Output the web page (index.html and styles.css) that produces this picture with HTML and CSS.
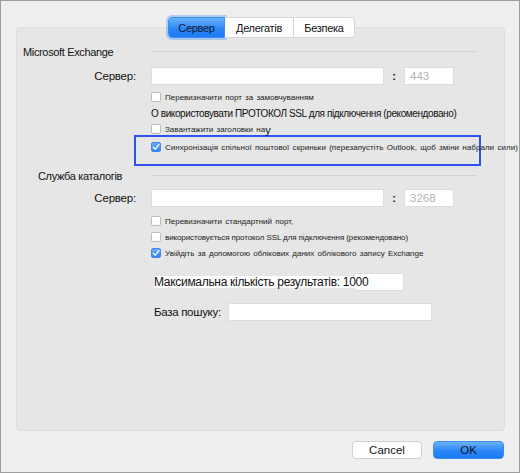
FILE: index.html
```html
<!DOCTYPE html>
<html>
<head>
<meta charset="utf-8">
<title>Обліковий запис Exchange</title>
<link rel="stylesheet" href="styles.css">
</head>
<body>
<div class="window">
	<div class="tabs">
		<span class="tab on">Сервер</span><span class="tab">Делегатів</span><span class="tab">Безпека</span>
	</div>
	<div class="panel">
		<div class="group-head h1"><span class="group-title">Microsoft Exchange</span><span class="rule"></span></div>
		<div class="row srv1">
			<span class="lbl">Сервер:</span>
			<div class="field wide"></div>
			<span class="colon">:</span>
			<div class="field port">443</div>
		</div>
		<div class="row indent c1"><span class="box"></span><span class="small">Перевизначити порт за замовчуванням</span></div>
		<div class="row indent ssl">О використовувати ПРОТОКОЛ SSL для підключення (рекомендовано)</div>
		<div class="row indent c3"><span class="box"></span><span class="small">Завантажити заголовки на</span><span class="big">у</span></div>
		<div class="callout">
			<div class="row"><span class="box on"><svg viewBox="0 0 10 10" width="10" height="10"><path d="M2.3 5.3 L4.2 7.3 L7.8 2.6" fill="none" stroke="#fff" stroke-width="1.3" stroke-linecap="round" stroke-linejoin="round"/></svg></span><span class="small wide-note">Синхронізація спільної поштової скриньки (перезапустіть Outlook, щоб зміни набрали сили)</span></div>
		</div>

		<div class="group-head h2"><span class="group-title">Служба каталогів</span><span class="rule"></span></div>
		<div class="row srv2">
			<span class="lbl">Сервер:</span>
			<div class="field wide"></div>
			<span class="colon">:</span>
			<div class="field port">3268</div>
		</div>
		<div class="row indent ca"><span class="box"></span><span class="small">Перевизначити стандартний порт,</span></div>
		<div class="row indent cb"><span class="box"></span><span class="small tight">використовується протокол SSL для підключення (рекомендовано)</span></div>
		<div class="row indent cc"><span class="box on"><svg viewBox="0 0 10 10" width="10" height="10"><path d="M2.3 5.3 L4.2 7.3 L7.8 2.6" fill="none" stroke="#fff" stroke-width="1.3" stroke-linecap="round" stroke-linejoin="round"/></svg></span><span class="small">Увійдіть за допомогою облікових даних облікового запису Exchange</span></div>

		<div class="row indent maxres"><span class="hl">Максимальна кількість результатів: 1000</span><div class="field num"></div></div>
		<div class="row indent base"><span class="plain">База пошуку:</span><div class="field search"></div></div>
	</div>
	<div class="buttons">
		<button class="btn">Cancel</button><button class="btn primary">OK</button>
	</div>
</div>
</body>
</html>
```

FILE: styles.css
```css
*{margin:0;padding:0;box-sizing:border-box;}
body{background:#fff;font-family:"Liberation Sans",Arial,sans-serif;color:#111;}

.window{width:520px;height:473px;border:1px solid #9d9d9d;background:#efefef;padding:16px 14px 0 15px;}

/* segmented tab control sits half over the panel */
.tabs{display:flex;justify-content:center;height:21px;margin-bottom:-11px;position:relative;z-index:1;padding-left:2px;}
.tab{display:flex;align-items:center;justify-content:center;height:21px;background:#fff;border:1px solid #d6d6d6;border-left:none;
	font-size:11px;letter-spacing:-0.3px;color:#111;}
.tab:nth-child(1){width:57px;}
.tab:nth-child(2){width:69px;}
.tab:nth-child(3){width:61px;border-radius:0 4px 4px 0;}
.tab.on{background:linear-gradient(#6cb2fb,#2a84f6 60%,#1f7af2);border:1px solid #3b8ef0;border-radius:4px 0 0 4px;
	box-shadow:0 0 0 2px rgba(120,175,245,.55);color:#0b1a33;}

.panel{height:404px;background:#e6e6e6;border:1px solid #dedede;border-radius:4px;padding-top:17px;padding-right:28px;}

.row{display:flex;align-items:center;}
.indent{padding-left:134px;}

.group-head{display:flex;align-items:center;height:14px;}
.group-title{width:134px;padding-left:6px;font-size:11px;letter-spacing:-0.35px;white-space:nowrap;}
.rule{width:325px;height:1px;background:#d2d2d2;margin-bottom:2px;}
.h2{margin-top:3px;}
.h2 .group-title{padding-left:21px;}

.lbl{width:119px;margin-right:15px;text-align:right;font-size:11.5px;letter-spacing:-0.2px;}
.field{height:18px;background:#fff;border:1px solid #dcdcdc;}
.wide{width:233px;}
.port{width:50px;font-size:11.5px;color:#b3b3b3;padding-left:5px;line-height:16px;}
.colon{width:20px;text-align:center;font-size:11px;font-weight:bold;}

.srv1{height:18px;margin-top:8px;}
.c1{height:12px;margin-top:6px;}
.ssl{height:14px;margin-top:3px;font-size:10px;letter-spacing:-0.4px;white-space:nowrap;}
.c3{height:12px;margin-top:3px;}
.srv2{height:18px;margin-top:6px;}
.ca{height:12px;margin-top:8px;}
.cb{height:12px;margin-top:4px;}
.cc{height:12px;margin-top:4px;}
.maxres{height:18px;margin-top:14px;}
.base{height:18px;margin-top:12px;}

.box{width:10px;height:10px;flex:none;background:#fff;border:1px solid #bcbcbc;border-radius:2px;margin-right:4px;display:flex;}
.box.on{background:linear-gradient(#6aaef9,#2f82f4);border-color:#3f89ee;}
.box svg{display:block;margin:-1px;}
.small{font-size:8px;color:#222;white-space:nowrap;word-spacing:1px;}
.small.wide-note{letter-spacing:0.04px;}
.small.tight{word-spacing:0;letter-spacing:-0.1px;}
.big{font-size:11px;line-height:10px;align-self:flex-end;}

/* blue frame drawn round the shared mailbox option */
.callout{margin-left:117px;width:347px;height:31px;border:2px solid #2d52ee;padding:5px 0 0 15px;}

.hl{margin-left:3px;background:#fff;font-size:12px;letter-spacing:-0.3px;line-height:12px;white-space:nowrap;position:relative;z-index:1;}
.num{width:50px;margin-left:-14px;}
.plain{margin-left:3px;font-size:11.5px;letter-spacing:-0.3px;margin-right:7px;white-space:nowrap;}
.search{width:204px;}

.buttons{display:flex;justify-content:flex-end;margin-top:10px;padding-right:1px;}
.btn{width:70px;height:18px;font-family:"Liberation Sans",Arial,sans-serif;font-size:11.5px;color:#111;background:#fff;
	border:1px solid #d2d2d2;border-radius:4px;}
.btn.primary{width:71px;margin-left:11px;background:linear-gradient(#6ab2fb,#2b86f7 55%,#1b7bf6);border-color:#3b8cf2;}
```
